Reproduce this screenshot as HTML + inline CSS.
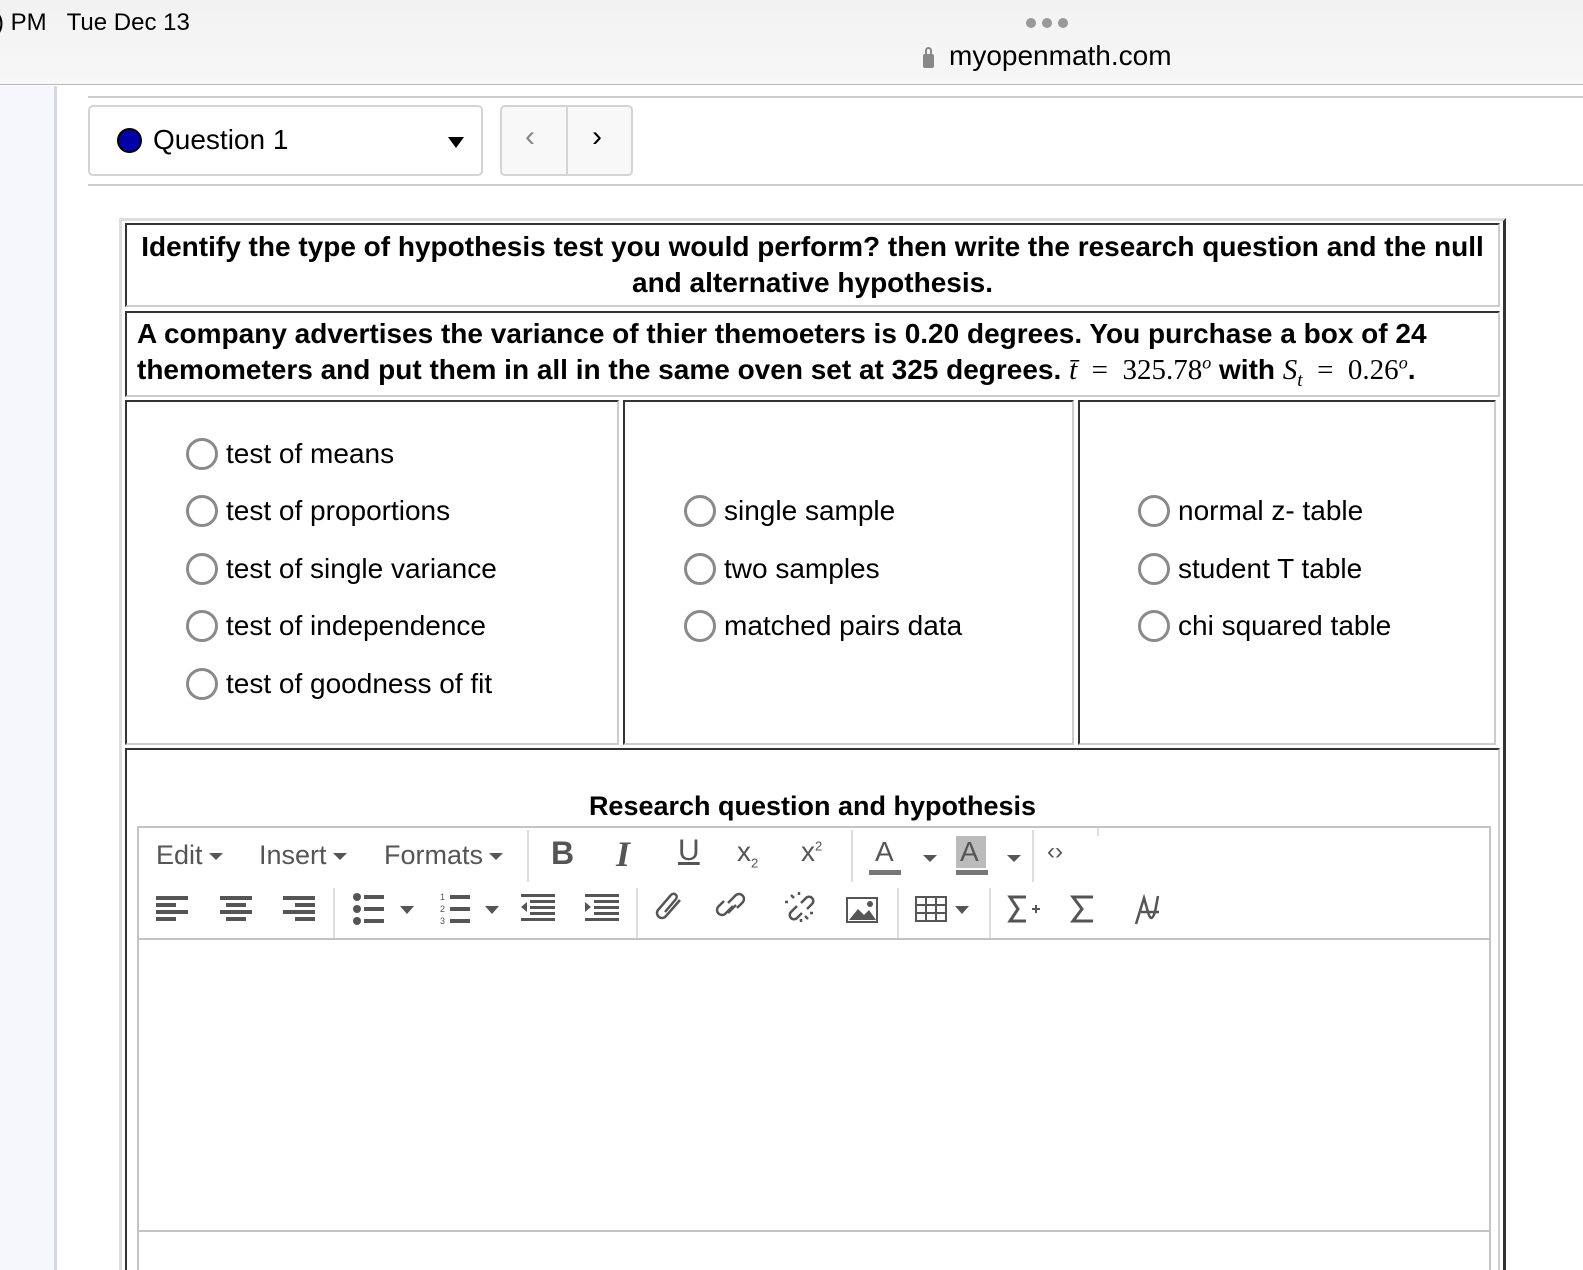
<!DOCTYPE html>
<html style="width:1583px;height:1270px;overflow:hidden"><head><meta charset="utf-8"><style>
*{margin:0;padding:0;box-sizing:border-box}
body{width:1583px;height:1270px;overflow:hidden;background:#fff;font-family:"Liberation Sans",sans-serif;position:relative;color:#000}
.a{position:absolute}
.in{position:absolute;border-style:solid;border-width:2px;border-color:#333 #ccc #ccc #333}
.t{position:absolute;white-space:nowrap}
.opt{position:absolute;font-size:28px;white-space:nowrap;line-height:32px}
.opt i{position:absolute;left:0;top:0;width:32px;height:32px;border:3px solid #8a8a8a;border-radius:50%}
.opt span{position:absolute;left:40px;top:0px}
.tb{position:absolute;color:#555;font-size:27px;white-space:nowrap}
.tri{display:inline-block;width:0;height:0;border-left:7px solid transparent;border-right:7px solid transparent;border-top:7px solid #555;vertical-align:middle;margin-left:6px}
.sep{position:absolute;width:2px;background:#ddd}
.m{font-family:"Liberation Serif",serif;font-weight:normal}
</style></head><body>
<div class="a" style="left:0;top:0;width:1583px;height:85px;background:linear-gradient(#f2f2f2,#f7f7f7);border-bottom:1px solid #b8b8b8"></div>
<div class="t" style="left:-4px;top:9px;font-size:24px">) PM&nbsp;&nbsp;&nbsp;Tue Dec 13</div>
<div class="a" style="left:1026px;top:18px;width:10px;height:10px;border-radius:50%;background:#999"></div>
<div class="a" style="left:1042px;top:18px;width:10px;height:10px;border-radius:50%;background:#999"></div>
<div class="a" style="left:1058px;top:18px;width:10px;height:10px;border-radius:50%;background:#999"></div>
<div class="a" style="left:923px;top:54px;width:11px;height:14px;border-radius:2px;background:#888"></div>
<div class="a" style="left:925px;top:47px;width:7px;height:10px;border:2px solid #888;border-radius:4px 4px 0 0"></div>
<div class="t" style="left:949px;top:40px;font-size:28px">myopenmath.com</div>
<div class="a" style="left:0;top:86px;width:57px;height:1184px;background:#f6f6fd;border-right:3px solid #d8d8de"></div>
<div class="a" style="left:88px;top:96px;width:1495px;height:2px;background:#ccc"></div>
<div class="a" style="left:88px;top:184px;width:1495px;height:2px;background:#ccc"></div>
<div class="a" style="left:88px;top:105px;width:395px;height:71px;border:2px solid #d4d4d4;border-radius:5px"></div>
<div class="a" style="left:117px;top:128px;width:25px;height:25px;border-radius:50%;background:#0000a8;border:2px solid #000"></div>
<div class="t" style="left:153px;top:124px;font-size:28px">Question 1</div>
<div class="a" style="left:448px;top:137px;border-left:8px solid transparent;border-right:8px solid transparent;border-top:11px solid #000"></div>
<div class="a" style="left:500px;top:105px;width:133px;height:71px;border:2px solid #d4d4d4;border-radius:5px;background:#f8f8f8"></div>
<div class="a" style="left:566px;top:106px;width:2px;height:69px;background:#d4d4d4"></div>
<div class="t" style="left:525px;top:120px;font-size:30px;color:#888">&lsaquo;</div>
<div class="t" style="left:592px;top:120px;font-size:30px;color:#000">&rsaquo;</div>

<div class="a" style="left:119px;top:218px;width:1387px;height:1052px;border-style:solid;border-width:3px 3px 0 3px;border-color:#ddd #333 #333 #ddd"></div>
<div class="in" style="left:125px;top:223px;width:1375px;height:84px"></div>
<div class="t" style="left:125px;top:229px;width:1375px;text-align:center;font-weight:bold;font-size:28px;line-height:36px">Identify the type of hypothesis test you would perform? then write the research question and the null<br>and alternative hypothesis.</div>
<div class="in" style="left:125px;top:311px;width:1375px;height:86px"></div>
<div class="t" style="left:137px;top:316px;font-weight:bold;font-size:28px;line-height:36px">A company advertises the variance of thier themoeters is 0.20 degrees. You purchase a box of 24<br>themometers and put them in all in the same oven set at 325 degrees. <span class="m" style="font-size:29px;line-height:20px"><i>t&#772;</i> &nbsp;= &nbsp;325.78<sup style="font-size:18px;line-height:0"><i>o</i></sup></span> with <span class="m" style="font-size:29px;line-height:20px"><i>S<sub style="font-size:19px;line-height:0">t</sub></i> &nbsp;= &nbsp;0.26<sup style="font-size:18px;line-height:0"><i>o</i></sup></span>.</div>

<div class="in" style="left:125px;top:400px;width:494px;height:345px"></div>
<div class="in" style="left:623px;top:400px;width:451px;height:345px"></div>
<div class="in" style="left:1078px;top:400px;width:418px;height:345px"></div>
<div class="opt" style="left:186px;top:438px"><i></i><span>test of means</span></div>
<div class="opt" style="left:186px;top:495px"><i></i><span>test of proportions</span></div>
<div class="opt" style="left:186px;top:553px"><i></i><span>test of single variance</span></div>
<div class="opt" style="left:186px;top:610px"><i></i><span>test of independence</span></div>
<div class="opt" style="left:186px;top:668px"><i></i><span>test of goodness of fit</span></div>
<div class="opt" style="left:684px;top:495px"><i></i><span>single sample</span></div>
<div class="opt" style="left:684px;top:553px"><i></i><span>two samples</span></div>
<div class="opt" style="left:684px;top:610px"><i></i><span>matched pairs data</span></div>
<div class="opt" style="left:1138px;top:495px"><i></i><span>normal z- table</span></div>
<div class="opt" style="left:1138px;top:553px"><i></i><span>student T table</span></div>
<div class="opt" style="left:1138px;top:610px"><i></i><span>chi squared table</span></div>

<div class="in" style="left:125px;top:748px;width:1375px;height:522px;border-bottom:0"></div>
<div class="t" style="left:125px;top:791px;width:1375px;text-align:center;font-weight:bold;font-size:27px">Research question and hypothesis</div>
<div class="a" style="left:137px;top:826px;width:1354px;height:444px;border:2px solid #c4c4c4;border-bottom:0"></div>
<div class="a" style="left:139px;top:938px;width:1350px;height:2px;background:#c4c4c4"></div>
<div class="a" style="left:139px;top:1230px;width:1350px;height:2px;background:#c4c4c4"></div>
<div class="sep" style="left:527px;top:830px;height:52px"></div>
<div class="sep" style="left:851px;top:830px;height:52px"></div>
<div class="sep" style="left:1032px;top:830px;height:52px"></div>
<div class="sep" style="left:1097px;top:828px;height:8px"></div>
<div class="sep" style="left:333px;top:888px;height:50px"></div>
<div class="sep" style="left:636px;top:888px;height:50px"></div>
<div class="sep" style="left:897px;top:888px;height:50px"></div>
<div class="sep" style="left:989px;top:888px;height:50px"></div>
<div class="tb" style="left:156px;top:840px">Edit<span class="tri"></span></div>
<div class="tb" style="left:259px;top:840px">Insert<span class="tri"></span></div>
<div class="tb" style="left:384px;top:840px">Formats<span class="tri"></span></div>
<div class="tb" style="left:551px;top:835px;font-weight:bold;font-size:32px">B</div>
<div class="tb" style="left:616px;top:833px;font-family:'Liberation Serif',serif;font-style:italic;font-size:36px;font-weight:bold">I</div>
<div class="tb" style="left:678px;top:834px;font-size:30px;text-decoration:underline">U</div>
<div class="tb" style="left:737px;top:836px;font-size:28px">x<sub style="font-size:13px">2</sub></div>
<div class="tb" style="left:801px;top:836px;font-size:28px">x<sup style="font-size:13px">2</sup></div>
<div class="tb" style="left:875px;top:836px;font-size:28px">A</div>
<div class="a" style="left:869px;top:870px;width:32px;height:5px;background:#777"></div>
<div class="tb" style="left:917px;top:842px"><span class="tri"></span></div>
<div class="a" style="left:956px;top:836px;width:30px;height:32px;background:#bbb"></div>
<div class="tb" style="left:960px;top:836px;font-size:28px">A</div>
<div class="a" style="left:956px;top:870px;width:32px;height:5px;background:#777"></div>
<div class="tb" style="left:1001px;top:842px"><span class="tri"></span></div>
<div class="tb" style="left:1047px;top:838px;font-size:24px">&lsaquo;&rsaquo;</div>
<svg class="a" style="left:150px;top:890px" width="1040" height="44" viewBox="150 890 1040 44" fill="#555" stroke="#555">
<g stroke="none">
<rect x="156" y="896" width="32" height="4"/><rect x="156" y="903" width="20" height="4"/><rect x="156" y="910" width="32" height="4"/><rect x="156" y="917" width="20" height="4"/>
<rect x="220" y="896" width="32" height="4"/><rect x="226" y="903" width="20" height="4"/><rect x="220" y="910" width="32" height="4"/><rect x="226" y="917" width="20" height="4"/>
<rect x="283" y="896" width="32" height="4"/><rect x="295" y="903" width="20" height="4"/><rect x="283" y="910" width="32" height="4"/><rect x="295" y="917" width="20" height="4"/>
<circle cx="357" cy="897" r="4"/><circle cx="357" cy="909" r="4"/><circle cx="357" cy="921" r="4"/>
<rect x="364" y="895" width="20" height="4"/><rect x="364" y="907" width="20" height="4"/><rect x="364" y="919" width="20" height="4"/>
<path d="M400 906h14l-7 8z"/>
<rect x="450" y="895" width="20" height="4"/><rect x="450" y="907" width="20" height="4"/><rect x="450" y="919" width="20" height="4"/>
<path d="M485 906h14l-7 8z"/>
<rect x="521" y="894" width="34" height="3"/><rect x="530" y="900" width="25" height="3"/><rect x="530" y="906" width="25" height="3"/><rect x="530" y="912" width="25" height="3"/><rect x="521" y="918" width="34" height="3"/><path d="M521 907l6-5v10z"/>
<rect x="585" y="894" width="34" height="3"/><rect x="594" y="900" width="25" height="3"/><rect x="594" y="906" width="25" height="3"/><rect x="594" y="912" width="25" height="3"/><rect x="585" y="918" width="34" height="3"/><path d="M591 907l-6-5v10z"/>
<path d="M849 920l9-11 6 6 5-5 7 10z"/><circle cx="870" cy="904" r="3"/>
<path d="M955 906h14l-7 8z"/>
</g>
<text x="440" y="900" font-size="9" stroke="none">1</text><text x="440" y="912" font-size="9" stroke="none">2</text><text x="440" y="924" font-size="9" stroke="none">3</text>
<g fill="none" stroke-width="2.5">
<path d="M680 900l-14 16a5 5 0 0 1 -8 -6l13 -15a3 3 0 0 1 5 4l-11 13"/>
<path d="M733 906l-8 8a5 5 0 0 1 -7 -7l6-6M737 908l6-6a5 5 0 0 0 -7 -7l-8 8M728 913l8-8"/>
<path d="M797 906l-6 6a4 4 0 0 0 6 6l5-5M801 903l5-5a4 4 0 0 1 6 6l-5 5M794 898l-3-3M799 895v-3M788 902h-3M805 916l3 3M801 919v3M810 913h3"/>
<rect x="847" y="898" width="30" height="24" stroke-width="2"/>
<path d="M916 897h30v24h-30zM916 905h30M916 913h30M926 897v24M936 897v24" stroke-width="2"/>
<path d="M1026 897h-16l8 12-8 12h16" stroke-width="3"/><path d="M1032 909h8M1036 905v8" stroke-width="2"/>
<path d="M1093 897h-20l9 12-9 12h20" stroke-width="3"/>
<path d="M1136 924l8-26 4 14 M1141 912h18 M1148 912q3 12 7 0l3 -16" stroke-width="2.5"/>
</g>
</svg>
</body></html>
